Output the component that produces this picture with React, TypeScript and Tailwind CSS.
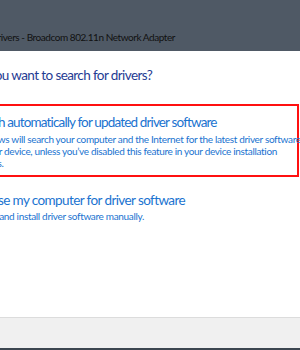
import React from "react";

export default function App() {
  return (
    <div
      className="w-[300px] h-[350px] overflow-hidden flex flex-col bg-white"
      style={{ fontFamily: 'Lato, "Noto Sans", sans-serif' }}
    >
      <div className="h-[51px] shrink-0 bg-[#4f5965] flex items-end pb-[7px] overflow-hidden">
        <span className="ml-[-41px] whitespace-nowrap text-[10px] tracking-[-0.45px] leading-[14px] text-[#111]">
          Update Drivers - Broadcom 802.11n Network Adapter
        </span>
      </div>
      <div className="flex-1 flex flex-col overflow-hidden">
        <div className="ml-[-57px] mt-[14px] whitespace-nowrap text-[13.5px] tracking-[-0.6px] leading-[20px] text-[#1f3c93]">
          How do you want to search for drivers?
        </div>
        <div className="mt-[19px] ml-[-60px] mr-[1px] border-2 border-[#ff1010] h-[73px] pl-[28px] pt-[6px]">
          <div className="whitespace-nowrap text-[13.5px] tracking-[-0.85px] leading-[20px] text-[#1a73d0]">
            Search automatically for updated driver software
          </div>
          <div className="whitespace-nowrap text-[10px] tracking-[-0.33px] leading-[12px] text-[#1a73d0] mt-[1px]">
            <div>Windows will search your computer and the Internet for the latest driver software</div>
            <div>for your device, unless you’ve disabled this feature in your device installation</div>
            <div>settings.</div>
          </div>
        </div>
        <div className="ml-[-31px] pt-[13px]">
          <div className="whitespace-nowrap text-[13.5px] tracking-[-0.6px] leading-[20px] text-[#1a73d0]">
            Browse my computer for driver software
          </div>
          <div className="ml-[1px] whitespace-nowrap text-[10px] tracking-[-0.33px] leading-[12px] text-[#1a73d0]">
            Locate and install driver software manually.
          </div>
        </div>
      </div>
      <div className="h-[31px] shrink-0 bg-[#f0f0f0] border-t border-[#dcdcdc]" />
      <div className="h-[2px] shrink-0 bg-[#3c4650]" />
    </div>
  );
}
